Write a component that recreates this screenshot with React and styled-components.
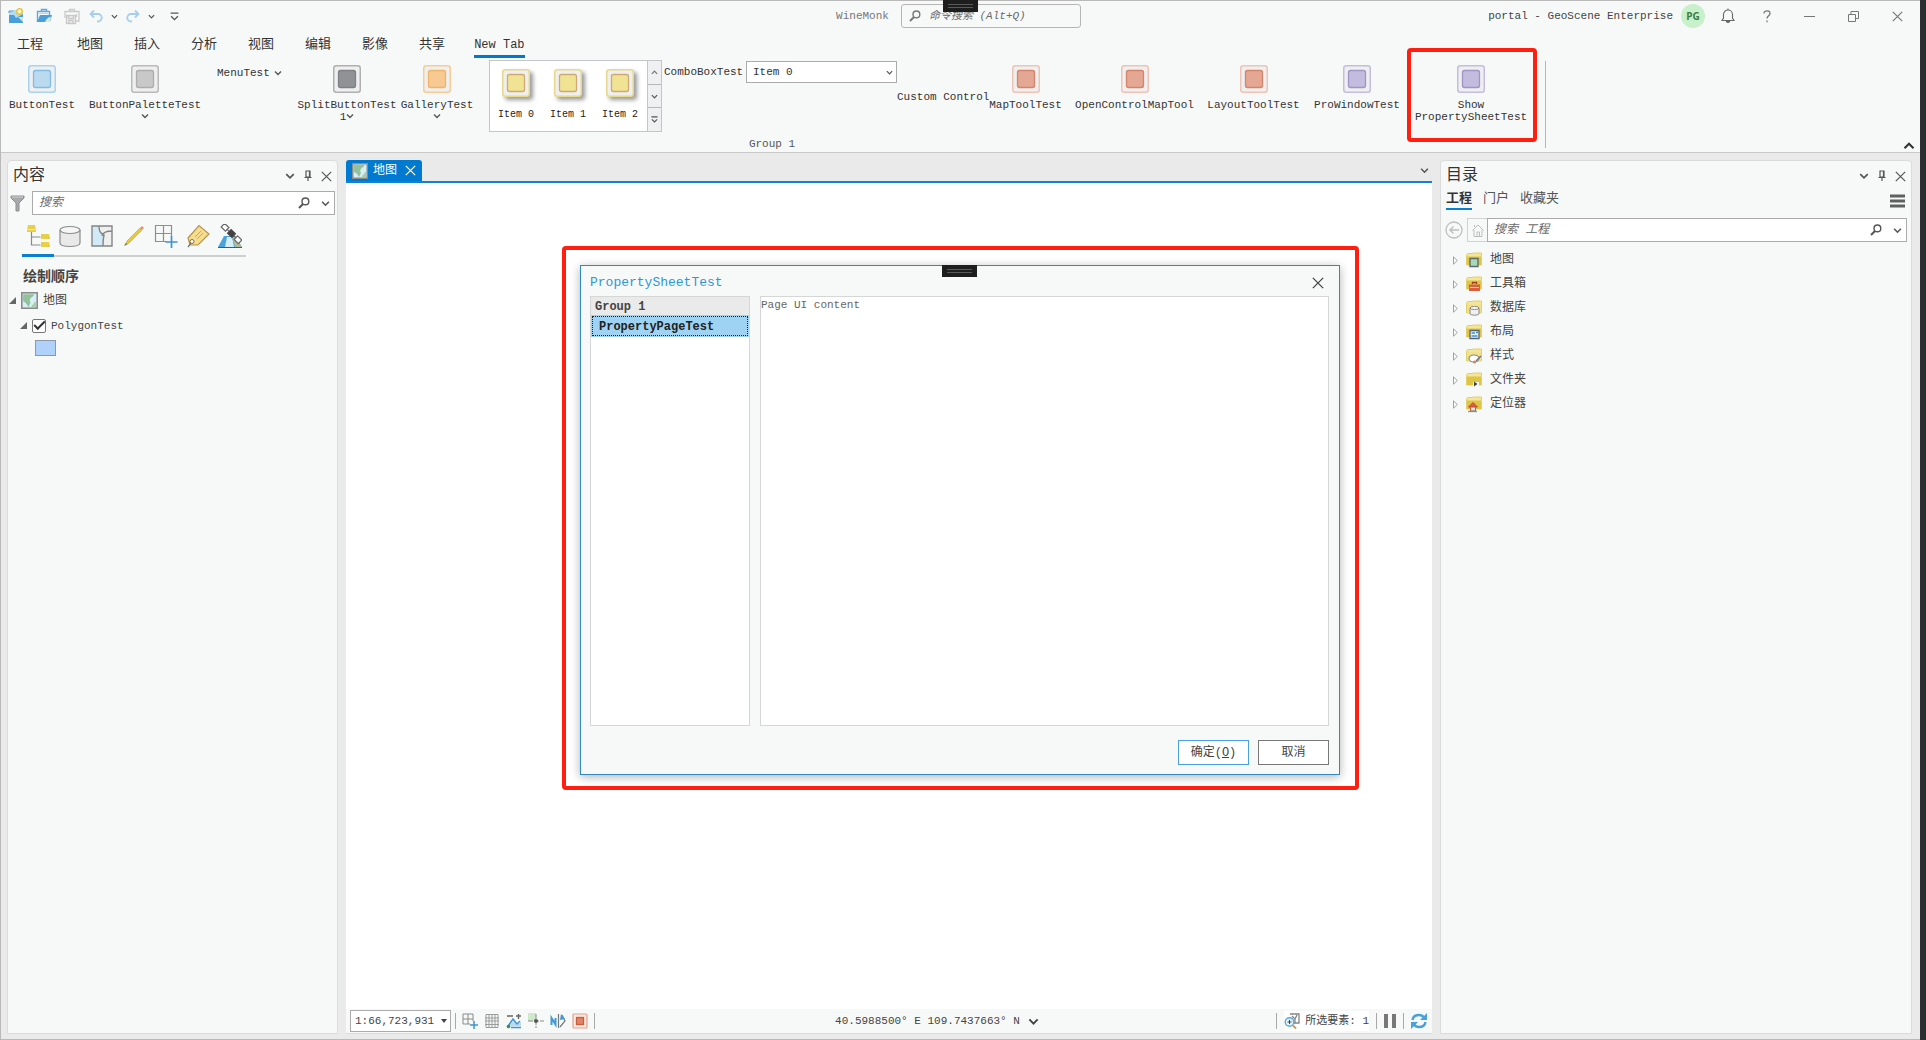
import React from 'react';
import styled, { createGlobalStyle } from 'styled-components';

const contentTools = ['order', 'source', 'selection', 'edit', 'snap', 'label', 'imagery'];

const catalogItems = [
  { name: '地图', badge: 'map' },
  { name: '工具箱', badge: 'toolbox' },
  { name: '数据库', badge: 'database' },
  { name: '布局', badge: 'layout' },
  { name: '样式', badge: 'style' },
  { name: '文件夹', badge: 'folder' },
  { name: '定位器', badge: 'locator' },
];

const ribbonTabs = ['工程', '地图', '插入', '分析', '视图', '编辑', '影像', '共享'];

const blue = { line: '#a9d3f1', ring: '#7fbce6', fill: '#bbdaf0' };
const gray = { line: '#bababa', ring: '#adadad', fill: '#c8c8c8' };
const dark = { line: '#b0b0b2', ring: '#7f8083', fill: '#919296' };
const orange = { line: '#f7cb97', ring: '#f0b468', fill: '#f8c992' };
const yellow = { line: '#e6d98a', ring: '#cfa878', fill: '#f0e394' };
const red = { line: '#f0c3b7', ring: '#d5836a', fill: '#e4a793' };
const purple = { line: '#c5bddf', ring: '#9f94c6', fill: '#c4bcde' };

/* ---------- icons ---------- */

const TileIcon = ({ tone, size = 28 }) => (
  <svg width={size} height={size} viewBox="0 0 28 28">
    <rect x="0.75" y="0.75" width="26.5" height="26.5" rx="2.5" fill="#efefef" stroke={tone.line} strokeWidth="1.5" />
    <rect x="5.5" y="5.5" width="17" height="17" rx="2" fill={tone.fill} stroke={tone.ring} strokeWidth="1.3" />
  </svg>
);

const Chevron = ({ w = 8, color = '#555', up }) => (
  <svg width={w} height={w} viewBox="0 0 8 8">
    <path d={up ? 'M1 5.5 4 2.5 7 5.5' : 'M1 2.5 4 5.5 7 2.5'} fill="none" stroke={color} strokeWidth="1.4" />
  </svg>
);

const OverflowIcon = ({ w = 8 }) => (
  <svg width={w} height={w} viewBox="0 0 8 8">
    <path d="M0.5 1h7M1 3.8 4 6.8 7 3.8" fill="none" stroke="#555" strokeWidth="1.2" />
  </svg>
);

const SearchIcon = ({ color = '#555' }) => (
  <svg width="12" height="12" viewBox="0 0 12 12" fill="none" stroke={color}>
    <circle cx="7.4" cy="4.4" r="3.4" strokeWidth="1.4" />
    <path d="M5 7 1 11" strokeWidth="2" />
  </svg>
);

const CloseIcon = ({ size = 11, color = '#555' }) => (
  <svg width={size} height={size} viewBox="0 0 11 11">
    <path d="M0.8 0.8 10.2 10.2M10.2 0.8 0.8 10.2" stroke={color} strokeWidth="1.2" />
  </svg>
);

const PinIcon = () => (
  <svg width="8" height="12" viewBox="0 0 8 12">
    <path d="M2 1h4v6H2zM0.5 7.5h7M4 7.5V11M5.5 1v6" fill="none" stroke="#555" strokeWidth="1.2" />
  </svg>
);

const MapIcon = ({ size = 16 }) => (
  <svg width={size} height={size} viewBox="0 0 16 16">
    <rect x="0.75" y="0.75" width="14.5" height="14.5" fill="#d9eff7" stroke="#8b8b8b" strokeWidth="1.5" />
    <path d="M2 2h10c1 2-2 2-3 4-1 1-1 2 0 4-1 1-1 3-2 4-1-1-1-2-2-3S3 9 2 9z" fill="#92c29a" />
    <path d="M14 9v5h-4c0-1 0-2 1-2s1-3 3-3z" fill="#a9cfa6" />
  </svg>
);

const NewProjectIcon = () => (
  <svg width="17" height="17" viewBox="0 0 17 17">
    <path d="M1 3h4V2h4v1h6v12H1z" fill="#b5dbf3" />
    <path d="M1 7h5l2 3 7-4v9H1z" fill="#4a9fd8" />
    <path d="M10 9l5 5V9z" fill="#cfe7d0" />
    <path d="M1 5V3h4" fill="none" stroke="#4a9fd8" />
    <circle cx="11.5" cy="3.5" r="2.8" fill="#fff3b0" stroke="#e6bf3b" strokeWidth="1.3" />
  </svg>
);

const OpenProjectIcon = () => (
  <svg width="17" height="17" viewBox="0 0 17 17">
    <path d="M5.5 3V1.5h5V3M1.5 14V3.5h12V7" fill="none" stroke="#5fa9db" strokeWidth="1.4" />
    <path d="M1 14 4 7h12l-2 7z" fill="#4a9fd8" />
    <path d="M9 14c1-3 3-5 6-5l-1 5z" fill="#d3ead4" />
    <path d="M3 5h9v1H3z" fill="#b5dbf3" />
  </svg>
);

const SaveIcon = () => (
  <svg width="17" height="17" viewBox="0 0 17 17" fill="none" stroke="#c9c9c9" strokeWidth="1.3">
    <path d="M5.5 3V1.5h5V3M1 10V3.5h14V13h-4" />
    <path d="M2.5 7.5h9v8h-9z" fill="#eee" />
    <path d="M4.5 8v2.5h5V8M5 15v-2.5h4V15M12.5 6v3" />
  </svg>
);

const UndoIcon = ({ flip }) => (
  <svg width="14" height="14" viewBox="0 0 14 14">
    <path
      d={flip ? 'M9 1.5 12.5 5 9 8.5M12.5 5H5a3.4 3.4 0 0 0 0 7.5h1' : 'M5 1.5 1.5 5 5 8.5M1.5 5H9a3.4 3.4 0 0 1 0 7.5H8'}
      fill="none"
      stroke="#a5cfee"
      strokeWidth="1.8"
    />
  </svg>
);

const BellIcon = () => (
  <svg width="14" height="16" viewBox="0 0 14 16" fill="none" stroke="#666" strokeWidth="1.1">
    <path d="M1 12.5h12L11.5 10V6.5A4.5 4.5 0 0 0 7 2 4.5 4.5 0 0 0 2.5 6.5V10zM7 2V0.5" />
    <path d="M5.5 13.5a1.6 1.6 0 0 0 3 0z" fill="#666" />
  </svg>
);

const HelpIcon = () => (
  <svg width="8" height="13" viewBox="0 0 8 13" fill="none" stroke="#777" strokeWidth="1.3">
    <path d="M1 3.5C1 1.8 2.3 0.9 4 0.9s3 1 3 2.6C7 5.8 4 5.8 4 8.6M4 10.5v1.8" />
  </svg>
);

const MinimizeIcon = () => (
  <svg width="11" height="11" viewBox="0 0 11 11"><path d="M0 5.5h11" stroke="#777" /></svg>
);

const RestoreIcon = () => (
  <svg width="11" height="11" viewBox="0 0 11 11" fill="none" stroke="#777">
    <path d="M0.5 3.5h7v7h-7zM3 3.5v-3h7.5v7H7.5" />
  </svg>
);

const FilterIcon = () => (
  <svg width="15" height="17" viewBox="0 0 15 17">
    <path d="M1 1h13v2L9 8v8H6V8L1 3z" fill="#a8a9ab" stroke="#8b8c8e" />
    <path d="M2 2h11" stroke="#d0d0d0" />
  </svg>
);

const toolDrawings = {
  order: (
    <>
      <path d="M5.5 8v13h9M5.5 13h9" fill="none" stroke="#8a8a8a" strokeWidth="1.2" />
      <path d="M2 1h7l1 5v2H1V6zM15 10h8l1 4v1h-9zM15 18h8l1 4v1h-9z" fill="#e8cf4a" />
      <path d="M1 5.5h9" stroke="#f5e79a" />
    </>
  ),
  source: (
    <>
      <path d="M2 6v13c0 2 4 3.500 10 3.500s10-1.500 10-3.500V6" fill="#e9e9e9" stroke="#8c8c8c" strokeWidth="1.2" />
      <ellipse cx="12" cy="6" rx="10" ry="3.5" fill="#f6f6f6" stroke="#8c8c8c" strokeWidth="1.2" />
    </>
  ),
  selection: (
    <>
      <path d="M2 2h20v20H2z" fill="#efefef" />
      <path d="M2 2h7c0 5 1 7 5 9-1 4-1 7-1 11H2z" fill="#d2e9f7" />
      <path d="M2 2h20v20H2zM9 2c0 5 1 7 5 9-1 4-1 7-1 11M12 12c1-4 6-5 10-5" fill="none" stroke="#858585" strokeWidth="1.4" />
    </>
  ),
  edit: (
    <>
      <path d="M3 21 5 17 18 4l2 2L7 19z" fill="#e6c93c" stroke="#c9a92b" strokeWidth="0.7" />
      <path d="M18 4l2-2 2 2-2 2z" fill="#e58f7c" />
      <path d="M2 22l2-3 1.500 1.500z" fill="#777" />
    </>
  ),
  snap: (
    <>
      <path d="M1.500 1.500h16v16h-16zM9.500 1.500v16M1.500 9.500h16" fill="none" stroke="#8f8f8f" strokeWidth="1.2" />
      <path d="M12.500 12.500h8v8h-8z" fill="#f7f9f9" />
      <path d="M17.500 12v12M11.500 18h12" stroke="#3c93cf" strokeWidth="1.7" />
    </>
  ),
  label: (
    <>
      <path d="M2 14 13 1.500 23 10 12 21H4z" fill="#f6dc8e" stroke="#b8924e" strokeWidth="1.2" />
      <path d="M9 13l6-6M11 15l6-6" stroke="#c9a860" />
      <circle cx="6" cy="17.5" r="2" fill="#fff" stroke="#8a6f40" />
      <path d="M5 19l-3 4" stroke="#777" strokeWidth="1.3" />
    </>
  ),
  imagery: (
    <>
      <path d="M0 23 6 12h11l7 11z" fill="#4aa3dc" />
      <path d="M9 13l-2 10h9l-2-10z" fill="#d6eef9" />
      <path d="M14 13h3l7 10h-7z" fill="#a9bd9c" />
      <path d="M0 23.500h24" stroke="#555" />
      <g transform="translate(13.5 9.5) rotate(44)" stroke="#666" strokeWidth="1.2">
        <path d="M-12-2.500h6v5h-6zM6-2.500h6v5H6z" fill="#fff" />
        <path d="M-6 0H6" />
        <path d="M-3-2.500h6v5h-6z" fill="#444" stroke="#444" />
      </g>
    </>
  ),
};

const ToolIcon = ({ name }) => <svg width="24" height="24" viewBox="0 0 24 24">{toolDrawings[name]}</svg>;

const folderBadges = {
  map: <path d="M4 6.500h8v8H4z" fill="#a9d8b8" stroke="#5d6b70" strokeWidth="1.4" />,
  toolbox: (
    <>
      <path d="M3 8.500h11V15H3z" fill="#d9603f" />
      <path d="M6.500 8V6.500h4V8" fill="none" stroke="#a13d24" strokeWidth="1.3" />
      <path d="M4 11.500h9" stroke="#f6d0c4" />
    </>
  ),
  database: (
    <>
      <path d="M4 8v6c1 1.500 8 1.500 9 0V8" fill="#efefef" stroke="#888" />
      <ellipse cx="8.5" cy="8" rx="4.5" ry="1.5" fill="#fff" stroke="#888" />
    </>
  ),
  layout: (
    <>
      <path d="M4 6.500h9v8H4z" fill="#e9f3fb" stroke="#59646c" strokeWidth="1.3" />
      <path d="M5.500 9H9M5.500 12h6M10 8.500h2" stroke="#3c93cf" strokeWidth="1.4" />
    </>
  ),
  style: (
    <>
      <ellipse cx="8" cy="10.5" rx="5" ry="3.5" fill="#fff" stroke="#8a8a8a" strokeWidth="1.2" />
      <path d="M10 13l5-5" stroke="#777" strokeWidth="1.4" />
      <circle cx="8.5" cy="14" r="1.5" fill="#dd8056" />
    </>
  ),
  folder: (
    <>
      <path d="M7 10h6v6H7z" fill="#f7f9f9" />
      <path d="M8 9.500 11.500 12 8 14.500z" fill="#444" />
    </>
  ),
  locator: (
    <>
      <path d="M2.500 11 7 6.500 11.500 11z" fill="#d9603f" stroke="#c34b2c" />
      <path d="M4.500 11h5v4h-5z" fill="#cfe7f2" stroke="#c8583b" />
      <path d="M2 15.500h9" stroke="#69a66b" strokeWidth="1.3" />
    </>
  ),
};

const FolderIcon = ({ badge }) => (
  <svg width="16" height="17" viewBox="0 0 16 17">
    <path d="M0.500 13V3l1-1.500H6L7.500 1H15.500v12z" fill="#f4e59a" stroke="#e3d06a" />
    <path d="M1 4.500h14V13H1z" fill={badge === 'style' || badge === 'database' ? '#f0e08c' : '#dfc545'} />
    {folderBadges[badge]}
  </svg>
);

const statusDrawings = {
  constraint: (
    <>
      <path d="M1 1h10v10H1zM6 1v10M1 6h10" fill="none" stroke="#8a8a8a" />
      <path d="M8 8h5v5H8z" fill="#f7f9f9" />
      <path d="M12 8v8M8 12h8" stroke="#3c93cf" strokeWidth="1.5" />
    </>
  ),
  grid: <path d="M2 1.500h12v13H2zM5 1v14M8 1v14M11 1v14M1 5h14M1 8h14M1 11.500h14" fill="none" stroke="#9b9b9b" />,
  correction: (
    <>
      <path d="M1 3h6M10 3h5M12.500 1v5" stroke="#666" strokeWidth="1.4" />
      <path d="M2 13 8 7l3 4 4-2v4H2z" fill="#b9daef" />
      <path d="M2 13 7 6l4 5 3-3M5 14.500h10" fill="none" stroke="#3c93cf" strokeWidth="1.4" />
      <circle cx="2.5" cy="13.5" r="1.8" fill="#3d8a4e" />
    </>
  ),
  snapping: (
    <>
      <path d="M0 0h8v8H0z" fill="#cfe9cb" />
      <path d="M8 1v14M0 8h16" stroke="#8a8a8a" strokeDasharray="5 1" />
      <circle cx="8" cy="8" r="2" fill="#555" />
    </>
  ),
  north: (
    <>
      <path d="M1.500 12V5l4 6.500V5" fill="none" stroke="#3f9ad6" strokeWidth="2" />
      <path d="M8.500 1v14" stroke="#777" strokeWidth="1.2" />
      <path d="M10 14l5-6-3-6" fill="none" stroke="#777" strokeWidth="1.2" />
      <path d="M11 1l4 5-5 1z" fill="#3f9ad6" />
    </>
  ),
  select: (
    <>
      <rect x="1" y="1" width="14" height="14" rx="1" fill="#fbe9e4" stroke="#e59f8b" strokeWidth="1.2" />
      <rect x="4.5" y="4.5" width="7" height="7" fill="#df8467" stroke="#cc5d3b" strokeWidth="1.3" />
    </>
  ),
  zoomTo: (
    <>
      <path d="M6 1h9v9H9M8 3l3 3 2-4M11 6v4" fill="none" stroke="#858585" strokeWidth="1.3" />
      <circle cx="5.5" cy="9" r="4.3" fill="#e3f2fb" stroke="#5ba9de" strokeWidth="1.4" />
      <path d="M3.500 9h4M5.500 7v4" stroke="#444" />
      <path d="M9 12.500l3 3" stroke="#cf9a56" strokeWidth="2" />
    </>
  ),
  refresh: (
    <>
      <path d="M1.500 7C2 3.500 5 2 8 2s4 1 5 2.500M14.500 9c-.5 3.500-3.500 5-6.500 5s-4-1-5-2.500" fill="none" stroke="#4aa0da" strokeWidth="2.4" />
      <path d="M16 0v7H9zM0 16V9h7z" fill="#4aa0da" />
    </>
  ),
};

const StatusIcon = ({ name }) => <svg width="16" height="16" viewBox="0 0 16 16">{statusDrawings[name]}</svg>;

const HomeIcon = () => (
  <svg width="12" height="13" viewBox="0 0 12 13" fill="none" stroke="#bdbdbd">
    <path d="M0.500 6.500 6 1l5.500 5.500M2 6v6.500h8V6M5 12.500V8h2.500v4.500M2.500 3V1" />
  </svg>
);

const BackIcon = () => (
  <svg width="18" height="18" viewBox="0 0 18 18" fill="none" stroke="#bdbdbd">
    <circle cx="9" cy="9" r="8" strokeWidth="1.3" />
    <path d="M14 9H5M8.500 5.500 5 9l3.500 3.500" strokeWidth="1.4" />
  </svg>
);

const MenuIcon = () => (
  <svg width="15" height="14" viewBox="0 0 15 14">
    <path d="M0 2h15M0 7h15M0 12h15" stroke="#606060" strokeWidth="3" />
  </svg>
);

const ArrowOpen = () => (
  <svg width="7" height="7" viewBox="0 0 7 7"><path d="M7 0v7H0z" fill="#666" /></svg>
);

const ArrowClosed = () => (
  <svg width="5" height="9" viewBox="0 0 5 9">
    <path d="M0.500 0.800 4.300 4.500 0.500 8.200z" fill="#fff" stroke="#a0a0a0" />
  </svg>
);

/* ---------- page ---------- */

const App = () => {
  const [tab, setTab] = React.useState('New Tab');
  const [visible, setVisible] = React.useState(true);

  return (
    <>
      <GlobalStyle />
      <Desktop>
        <Window>
          <TitleBar>
            <QuickAccess>
              <FileButtons>
                <IconButton aria-label="New project"><NewProjectIcon /></IconButton>
                <IconButton aria-label="Open project"><OpenProjectIcon /></IconButton>
                <IconButton aria-label="Save"><SaveIcon /></IconButton>
              </FileButtons>
              <IconButton aria-label="Undo"><UndoIcon /></IconButton>
              <IconButton aria-label="Undo list"><Chevron w={7} /></IconButton>
              <IconButton aria-label="Redo"><UndoIcon flip /></IconButton>
              <IconButton aria-label="Redo list"><Chevron w={7} /></IconButton>
              <CustomizeButton aria-label="Customize"><OverflowIcon w={9} /></CustomizeButton>
            </QuickAccess>
            <TitleCenter>
              <ProjectName>WineMonk</ProjectName>
              <CommandSearch>
                <SearchIcon color="#777" />
                <SearchInput aria-label="命令搜索" placeholder="命令搜索 (Alt+Q)" />
              </CommandSearch>
            </TitleCenter>
            <Account>
              <span>portal - GeoScene Enterprise</span>
              <Avatar>PG</Avatar>
              <IconButton aria-label="Notifications"><BellIcon /></IconButton>
              <CaptionButtons>
                <IconButton aria-label="Help"><HelpIcon /></IconButton>
                <IconButton aria-label="Minimize"><MinimizeIcon /></IconButton>
                <IconButton aria-label="Restore"><RestoreIcon /></IconButton>
                <IconButton aria-label="Close"><CloseIcon color="#777" /></IconButton>
              </CaptionButtons>
            </Account>
            <Grip><GripLines /></Grip>
          </TitleBar>

          <TabStrip>
            {ribbonTabs.map((name) => (
              <RibbonTab key={name} onClick={() => setTab(name)} $active={tab === name}>{name}</RibbonTab>
            ))}
            <CustomTab onClick={() => setTab('New Tab')} $active={tab === 'New Tab'}>New Tab</CustomTab>
          </TabStrip>

          <Ribbon>
            <RibbonGroup>
              <GroupItems>
                <BigButton $width={82}><TileIcon tone={blue} />ButtonTest</BigButton>
                <BigButton $width={124}><TileIcon tone={gray} /><span>ButtonPaletteTest<br /><Chevron /></span></BigButton>
                <MenuButton>MenuTest<Chevron /></MenuButton>
                <BigButton $width={102}><TileIcon tone={dark} /><span>SplitButtonTest<br />1<Chevron /></span></BigButton>
                <BigButton $width={78}><TileIcon tone={orange} /><span>GalleryTest<br /><Chevron /></span></BigButton>
                <Gallery>
                  {['Item 0', 'Item 1', 'Item 2'].map((item) => (
                    <GalleryItem key={item}><TileIcon tone={yellow} />{item}</GalleryItem>
                  ))}
                  <GalleryScroll>
                    <ScrollButton aria-label="Scroll up"><Chevron w={7} up color="#777" /></ScrollButton>
                    <ScrollButton aria-label="Scroll down"><Chevron w={7} /></ScrollButton>
                    <ScrollButton aria-label="More"><OverflowIcon w={7} /></ScrollButton>
                  </GalleryScroll>
                </Gallery>
                <ComboField>
                  <label htmlFor="combo">ComboBoxTest</label>
                  <ComboBox>
                    <ComboSelect id="combo"><option>Item 0</option></ComboSelect>
                    <SelectArrow><Chevron w={7} /></SelectArrow>
                  </ComboBox>
                </ComboField>
                <CustomControl>Custom Control</CustomControl>
                <BigButton $width={75}><TileIcon tone={red} />MapToolTest</BigButton>
                <BigButton $width={143}><TileIcon tone={red} />OpenControlMapTool</BigButton>
                <BigButton $width={95}><TileIcon tone={red} />LayoutToolTest</BigButton>
                <BigButton $width={112}><TileIcon tone={purple} />ProWindowTest</BigButton>
                <Marked>
                  <BigButton $width={116}><TileIcon tone={purple} /><span>Show<br />PropertySheetTest</span></BigButton>
                  <ButtonMark />
                </Marked>
              </GroupItems>
              <GroupName>Group 1</GroupName>
            </RibbonGroup>
            <IconButton aria-label="Collapse ribbon"><Chevron w={12} up color="#333" /></IconButton>
          </Ribbon>

          <Workspace>
            <ContentsPane>
              <PaneHeader>
                <PaneTitle>内容</PaneTitle>
                <PaneButtons />
              </PaneHeader>
              <SearchRow>
                <FilterIcon />
                <SearchBox>
                  <SearchInput aria-label="搜索" placeholder="搜索" />
                  <SearchIcon />
                  <Chevron w={9} />
                </SearchBox>
              </SearchRow>
              <ToolTabs>
                {contentTools.map((name, i) => (
                  <ToolTab key={name} aria-label={name} $active={i === 0}><ToolIcon name={name} /></ToolTab>
                ))}
              </ToolTabs>
              <ListHeading>绘制顺序</ListHeading>
              <LayerTree>
                <LayerRow><ArrowOpen /><MapIcon size={17} />地图</LayerRow>
                <LayerRow $level={1}>
                  <ArrowOpen />
                  <LayerCheck id="layer" type="checkbox" checked={visible} onChange={() => setVisible(!visible)} />
                  <label htmlFor="layer">PolygonTest</label>
                </LayerRow>
                <Swatch />
              </LayerTree>
            </ContentsPane>

            <MapPane>
              <DocumentTabs>
                <DocumentTab>
                  <MapIcon />
                  地图
                  <TabClose aria-label="Close map"><CloseIcon color="#fff" /></TabClose>
                </DocumentTab>
                <IconButton aria-label="Open views"><Chevron w={9} /></IconButton>
              </DocumentTabs>
              <MapView />
              <StatusBar>
                <StatusGroup>
                  <ScaleBox>
                    <ScaleSelect aria-label="Scale"><option>1:66,723,931</option></ScaleSelect>
                    <SelectArrow><ScaleArrow /></SelectArrow>
                  </ScaleBox>
                  <Divider />
                  {['constraint', 'grid', 'correction', 'snapping', 'north', 'select'].map((name) => (
                    <IconButton key={name} aria-label={name}><StatusIcon name={name} /></IconButton>
                  ))}
                  <Divider />
                </StatusGroup>
                <Coordinates>40.5988500° E 109.7437663° N<Chevron w={11} color="#444" /></Coordinates>
                <StatusGroup $end>
                  <Divider />
                  <SelectedCount><StatusIcon name="zoomTo" />所选要素: 1</SelectedCount>
                  <Divider />
                  <PauseButton aria-label="Pause drawing" />
                  <Divider />
                  <IconButton aria-label="Refresh"><StatusIcon name="refresh" /></IconButton>
                </StatusGroup>
              </StatusBar>
            </MapPane>

            <CatalogPane>
              <PaneHeader>
                <PaneTitle>目录</PaneTitle>
                <PaneButtons />
              </PaneHeader>
              <CatalogTabs>
                <CatalogTab $active>工程</CatalogTab>
                <CatalogTab>门户</CatalogTab>
                <CatalogTab>收藏夹</CatalogTab>
                <MenuSlot aria-label="Menu"><MenuIcon /></MenuSlot>
              </CatalogTabs>
              <CatalogSearch>
                <IconButton aria-label="Back"><BackIcon /></IconButton>
                <SearchJoin>
                  <HomeButton aria-label="Home"><HomeIcon /></HomeButton>
                  <SearchBox>
                    <SearchInput aria-label="搜索 工程" placeholder="搜索 工程" />
                    <SearchIcon />
                    <Chevron w={9} />
                  </SearchBox>
                </SearchJoin>
              </CatalogSearch>
              <CatalogTree>
                {catalogItems.map((item) => (
                  <CatalogRow key={item.name}><ArrowClosed /><FolderIcon badge={item.badge} />{item.name}</CatalogRow>
                ))}
              </CatalogTree>
            </CatalogPane>
          </Workspace>
        </Window>

        <Overlay>
          <Dialog role="dialog" aria-labelledby="sheet-title">
            <Grip><GripLines /></Grip>
            <DialogHeader>
              <DialogTitle id="sheet-title">PropertySheetTest</DialogTitle>
              <IconButton aria-label="Close dialog"><CloseIcon size={12} color="#444" /></IconButton>
            </DialogHeader>
            <DialogBody>
              <PageList>
                <PageGroup>Group 1</PageGroup>
                <PageItem>PropertyPageTest</PageItem>
              </PageList>
              <PageContent>Page UI content</PageContent>
            </DialogBody>
            <DialogFooter>
              <DialogButton $primary>确定(<u>O</u>)</DialogButton>
              <DialogButton>取消</DialogButton>
            </DialogFooter>
            <DialogMark />
          </Dialog>
        </Overlay>
      </Desktop>
    </>
  );
};

const PaneButtons = () => (
  <PaneActions>
    <IconButton aria-label="Pane options"><Chevron w={10} /></IconButton>
    <IconButton aria-label="Auto hide"><PinIcon /></IconButton>
    <IconButton aria-label="Close pane"><CloseIcon /></IconButton>
  </PaneActions>
);

export default App;


const GlobalStyle = createGlobalStyle`
  * {
    box-sizing: border-box;
  }
  body {
    margin: 0;
    background-color: #2d2e31;
    color: #444;
    font-family: "Liberation Mono", "Noto Sans CJK SC", monospace;
    font-size: 11px;
    line-height: 12px;
  }
  button, input, select {
    margin: 0;
    padding: 0;
    border: 0;
    background: none;
    color: inherit;
    font: inherit;
    border-radius: 0;
  }
  svg {
    flex: none;
  }
`;

const Desktop = styled.div`
  position: relative;
  min-height: 100vh;
  display: flex;
  padding-right: 6px;
`;

const Window = styled.div`
  flex: 1;
  min-width: 0;
  display: flex;
  flex-direction: column;
  background-color: #eaeaea;
  border: 1px solid #b9b9b9;
  border-right: 0;
`;

const IconButton = styled.button`
  display: flex;
  align-items: center;
  justify-content: center;
`;

const TitleBar = styled.header`
  position: relative;
  display: grid;
  grid-template-columns: 1fr auto 1fr;
  align-items: center;
  height: 30px;
  background-color: #f7f9f9;
`;

const QuickAccess = styled.div`
  display: flex;
  align-items: center;
  gap: 8px;
  padding-left: 7px;
`;

const FileButtons = styled.div`
  display: flex;
  gap: 11px;
`;

const CustomizeButton = styled(IconButton)`
  margin-left: 7px;
`;

const TitleCenter = styled.div`
  display: flex;
  align-items: center;
  gap: 12px;
  padding-right: 4px;
`;

const ProjectName = styled.span`
  color: #777;
`;

const CommandSearch = styled.div`
  display: flex;
  align-items: center;
  gap: 8px;
  width: 180px;
  height: 24px;
  padding: 0 7px;
  border: 1px solid #b5b5b5;
  border-radius: 3px;
`;

const SearchInput = styled.input`
  flex: 1;
  min-width: 0;
  font-size: 12px;
  outline: none;

  &::placeholder {
    color: #6a6a6a;
    font-style: italic;
  }

  ${CommandSearch} & {
    font-size: 11px;
  }
`;

const Account = styled.div`
  display: flex;
  align-items: center;
  justify-content: flex-end;
  padding-right: 17px;
`;

const Avatar = styled.span`
  width: 24px;
  height: 24px;
  margin: 0 16px 0 8px;
  border-radius: 50%;
  background-color: #c8f0cb;
  color: #3b7d44;
  font: bold 10px/24px "Open Sans", sans-serif;
  text-align: center;
`;

const CaptionButtons = styled.div`
  display: flex;
  gap: 33px;
  margin-left: 28px;
`;

const Grip = styled.div`
  position: absolute;
  top: -1px;
  left: 50%;
  width: 35px;
  height: 12px;
  margin-left: -18px;
  padding: 4px 5px;
  background-color: #1e1e1e;
`;

const GripLines = styled.div`
  height: 4px;
  border: solid #5a5a5a;
  border-width: 1px 0;
`;

const TabStrip = styled.nav`
  display: flex;
  gap: 28px;
  height: 27px;
  padding-left: 14px;
  background-color: #f7f9f9;
`;

const RibbonTab = styled.button`
  padding: 3px 1px 0 2px;
  font-size: 13px;
  white-space: nowrap;
  color: #333;
  border-bottom: 3px solid ${(props) => (props.$active ? '#0078d0' : 'transparent')};

  &:first-child {
    margin-right: 3px;
  }
`;

const CustomTab = styled(RibbonTab)`
  padding: 3px 0 0;
  font-size: 12px;
`;

const Ribbon = styled.section`
  display: flex;
  justify-content: space-between;
  align-items: flex-end;
  height: 95px;
  padding-right: 5px;
  background-color: #f7f9f9;
  border-bottom: 1px solid #c9c9c9;
`;

const RibbonGroup = styled.div`
  align-self: flex-start;
  height: 90px;
  padding-right: 17px;
  background: linear-gradient(#b5b5b5, #b5b5b5) no-repeat right 3px / 1px 87px;
`;

const GroupItems = styled.div`
  display: flex;
  height: 80px;
`;

const GroupName = styled.div`
  margin-right: -14px;
  text-align: center;
  color: #555;
`;

const BigButton = styled.button`
  display: flex;
  flex-direction: column;
  align-items: center;
  gap: 6px;
  width: ${(props) => props.$width}px;
  padding-top: 7px;
  white-space: nowrap;
  color: #333;
`;

const MenuButton = styled.button`
  display: flex;
  align-items: center;
  gap: 4px;
  width: 89px;
  height: 12px;
  margin-top: 9px;
  padding-left: 10px;
  color: #333;
`;

const Gallery = styled.div`
  display: flex;
  width: 173px;
  height: 72px;
  margin: 2px 2px 0 13px;
  background-color: #fff;
  border: 1px solid #c3c5c9;
`;

const GalleryItem = styled.button`
  display: flex;
  flex-direction: column;
  align-items: center;
  gap: 12px;
  width: 52px;
  padding-top: 8px;
  font-size: 10px;
  color: #222;

  svg {
    filter: drop-shadow(3px 3px 2px rgba(0, 0, 0, 0.4));
  }
`;

const GalleryScroll = styled.div`
  width: 14px;
  margin-left: auto;
  display: flex;
  flex-direction: column;
  border-left: 1px solid #c3c5c9;
  background-color: #eef0f2;
`;

const ScrollButton = styled(IconButton)`
  flex: 1;

  & + & {
    border-top: 1px solid #b5b7ba;
  }
`;

const ComboField = styled.div`
  display: flex;
  align-items: center;
  justify-content: space-between;
  width: 233px;
  height: 22px;
  margin-top: 3px;
  color: #333;
`;

const ComboBox = styled.div`
  position: relative;
  display: flex;
`;

const ComboSelect = styled.select`
  appearance: none;
  width: 151px;
  height: 22px;
  padding-left: 6px;
  border: 1px solid #ababab;
  background-color: #fff;
`;

const SelectArrow = styled.span`
  position: absolute;
  top: 0;
  bottom: 0;
  right: 4px;
  display: flex;
  align-items: center;
  pointer-events: none;
`;

const CustomControl = styled.div`
  width: 91px;
  padding-top: 33px;
  white-space: nowrap;
  color: #333;
`;

const Marked = styled.div`
  position: relative;
  display: flex;
`;

const ButtonMark = styled.div`
  position: absolute;
  inset: -10px -8px -4px -6px;
  border: 4px solid #ff1e10;
  border-radius: 4px;
  pointer-events: none;
`;

const Workspace = styled.main`
  flex: 1;
  display: flex;
  gap: 8px;
  padding: 7px 8px 5px 6px;
`;

const Pane = styled.section`
  display: flex;
  flex-direction: column;
  background-color: #f7f9f9;
  border: 1px solid #dadbdb;
  border-radius: 4px 4px 0 0;
`;

const ContentsPane = styled(Pane)`
  width: 331px;
`;

const CatalogPane = styled(Pane)`
  width: 472px;
`;

const PaneHeader = styled.div`
  display: flex;
  align-items: center;
  justify-content: space-between;
  height: 30px;
  padding: 0 5px;
`;

const PaneTitle = styled.h2`
  margin: 0;
  font-size: 16px;
  font-weight: 400;
  line-height: 20px;
  color: #333;
`;

const PaneActions = styled.div`
  display: flex;
  align-items: center;
  gap: 9px;
`;

const SearchRow = styled.div`
  display: flex;
  align-items: center;
  gap: 7px;
  padding: 0 2px;
`;

const SearchBox = styled.div`
  flex: 1;
  display: flex;
  align-items: center;
  gap: 11px;
  height: 24px;
  padding: 0 4px 0 6px;
  border: 1px solid #ababab;
  background-color: #fff;
`;

const ToolTabs = styled.div`
  display: flex;
  align-self: flex-start;
  margin: 7px 0 0 14px;
  border-bottom: 2px solid #cfcfcf;
`;

const ToolTab = styled(IconButton)`
  width: 32px;
  height: 35px;
  margin-bottom: -2px;
  padding-bottom: 4px;
  border-bottom: 3px solid ${(props) => (props.$active ? '#0a7fcf' : 'transparent')};
`;

const ListHeading = styled.h3`
  margin: 10px 0 1px 15px;
  font-size: 14px;
  line-height: 20px;
`;

const LayerTree = styled.div`
  display: flex;
  flex-direction: column;
`;

const LayerRow = styled.div`
  display: flex;
  align-items: center;
  gap: 5px;
  height: 25px;
  padding-left: ${(props) => (props.$level ? 12 : 1)}px;
  font-size: ${(props) => (props.$level ? 11 : 12)}px;
`;

const LayerCheck = styled.input`
  appearance: none;
  width: 14px;
  height: 14px;
  display: grid;
  place-items: center;
  border: 1px solid #777;
  border-radius: 2px;
  background-color: #fff;

  &:checked::after {
    content: "";
    width: 9px;
    height: 4px;
    margin-bottom: 3px;
    border: solid #333;
    border-width: 0 0 2px 2px;
    transform: rotate(-45deg);
  }
`;

const Swatch = styled.div`
  width: 21px;
  height: 16px;
  margin: 2px 0 0 27px;
  background-color: #b0d2fa;
  border: 1px solid #8d99a8;
`;

const MapPane = styled.section`
  flex: 1;
  min-width: 0;
  display: flex;
  flex-direction: column;
  border-bottom: 1px solid #dadbdb;
`;

const DocumentTabs = styled.div`
  display: flex;
  align-items: stretch;
  justify-content: space-between;
  height: 23px;
  padding-right: 3px;
  border-bottom: 2px solid #1182cf;
`;

const DocumentTab = styled.div`
  display: flex;
  align-items: center;
  gap: 5px;
  padding: 0 6px;
  border-radius: 3px 3px 0 0;
  background-color: #007ad0;
  color: #fff;
  font-size: 12px;
`;

const TabClose = styled(IconButton)`
  margin-left: 3px;
`;

const MapView = styled.div`
  flex: 1;
  background-color: #fff;
`;

const StatusBar = styled.footer`
  display: grid;
  grid-template-columns: 5fr auto 4fr;
  align-items: center;
  height: 24px;
  padding: 0 5px 0 4px;
  background-color: #f7f9f9;
`;

const StatusGroup = styled.div`
  display: flex;
  align-items: center;
  gap: ${(props) => (props.$end ? 7 : 6)}px;
  justify-content: ${(props) => (props.$end ? 'flex-end' : 'flex-start')};
`;

const ScaleBox = styled(ComboBox)`
  margin-right: -2px;
`;

const ScaleSelect = styled(ComboSelect)`
  width: 101px;
  padding-left: 4px;
`;

const ScaleArrow = styled.span`
  border: 3px solid transparent;
  border-top: 4px solid #444;
  border-bottom: 0;
`;

const Divider = styled.span`
  width: 1px;
  height: 16px;
  background-color: #a9a9a9;
`;

const Coordinates = styled.div`
  display: flex;
  align-items: center;
  gap: 8px;
`;

const SelectedCount = styled.button`
  display: flex;
  align-items: center;
  gap: 5px;
  height: 20px;
  background-color: #fff;
`;

const PauseButton = styled.button`
  width: 12px;
  height: 14px;
  border: solid #777;
  border-width: 0 4px;
`;

const CatalogTabs = styled.div`
  display: flex;
  gap: 11px;
  padding: 0 6px 0 5px;
`;

const CatalogTab = styled.button`
  height: 19px;
  padding-bottom: 2px;
  font-size: 13px;
  font-weight: ${(props) => (props.$active ? 700 : 400)};
  color: ${(props) => (props.$active ? '#333' : '#555')};
  border-bottom: 2px solid ${(props) => (props.$active ? '#0a7fcf' : 'transparent')};
`;

const MenuSlot = styled(IconButton)`
  margin-left: auto;
`;

const CatalogSearch = styled.div`
  display: flex;
  align-items: center;
  gap: 4px;
  padding: 8px 4px 6px;
`;

const SearchJoin = styled.div`
  flex: 1;
  display: flex;
`;

const HomeButton = styled(IconButton)`
  width: 20px;
  border: 1px solid #d2d2d2;
  border-right: 0;
`;

const CatalogTree = styled.div`
  display: flex;
  flex-direction: column;
`;

const CatalogRow = styled.div`
  display: flex;
  align-items: center;
  gap: 8px;
  height: 24px;
  padding-left: 12px;
  font-size: 12px;
`;

const Overlay = styled.div`
  position: absolute;
  inset: 0 6px 0 0;
  display: flex;
  align-items: center;
  justify-content: center;
  pointer-events: none;
`;

const Dialog = styled.div`
  position: relative;
  display: flex;
  flex-direction: column;
  width: 760px;
  height: 510px;
  padding: 0 10px 9px 9px;
  background-color: #f7f9f9;
  border: 1px solid #3088c4;
  box-shadow: 0 2px 9px rgba(0, 0, 0, 0.3);
  pointer-events: auto;
`;

const DialogMark = styled.div`
  position: absolute;
  inset: -20px -20px -16px -19px;
  border: 4px solid #ff1e10;
  border-radius: 4px;
  pointer-events: none;
`;

const DialogHeader = styled.div`
  display: flex;
  align-items: center;
  justify-content: space-between;
  height: 30px;
  padding: 3px 5px 0 0;
`;

const DialogTitle = styled.h1`
  margin: 0;
  font-size: 13px;
  font-weight: 400;
  color: #3096d6;
`;

const DialogBody = styled.div`
  flex: 1;
  display: flex;
  gap: 10px;
`;

const PageList = styled.div`
  width: 160px;
  border: 1px solid #d5d6d6;
  background-color: #fff;
  font-size: 12px;
  font-weight: 700;
`;

const PageGroup = styled.div`
  height: 18px;
  padding: 4px 4px 2px;
  background-color: #eaeaea;
`;

const PageItem = styled.button`
  display: block;
  width: 100%;
  height: 22px;
  padding: 1px 8px 0;
  text-align: left;
  background-color: #9fd3f3;
  color: #222;
  outline: 1px dotted #222;
  outline-offset: -2px;
`;

const PageContent = styled.div`
  flex: 1;
  padding-top: 2px;
  border: 1px solid #d5d6d6;
  background-color: #fff;
  color: #666;
`;

const DialogFooter = styled.div`
  display: flex;
  justify-content: flex-end;
  gap: 9px;
  padding-top: 14px;
`;

const DialogButton = styled.button`
  width: 71px;
  height: 25px;
  background-color: #fff;
  border: 1px solid ${(props) => (props.$primary ? '#4a9fe0' : '#777')};
  font-size: 12px;
`;
